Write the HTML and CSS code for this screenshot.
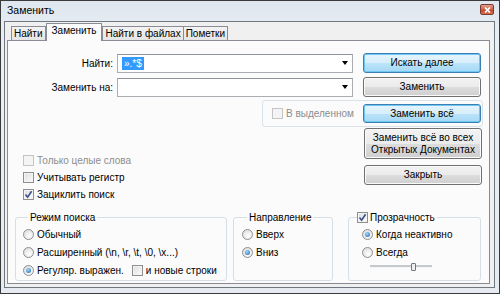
FILE: index.html
```html
<!DOCTYPE html>
<html lang="ru">
<head>
    <meta charset="UTF-8">
    <title>Заменить</title>
    <link rel="stylesheet" href="styles.css">
</head>
<body>
    <div class="window">
        <div class="titlebar">
            <span class="title">Заменить</span>
            <span class="close">
                <svg width="7" height="6" viewBox="0 0 7 6"><path d="M1 0.5L6 5.5M6 0.5L1 5.5" stroke="#fff" stroke-width="1.7"/></svg>
            </span>
        </div>
        <div class="client">
            <div class="tabs">
                <div class="tab">Найти</div>
                <div class="tab active">Заменить</div>
                <div class="tab">Найти в файлах</div>
                <div class="tab">Пометки</div>
            </div>
            <div class="panel">
                <div class="row">
                    <span class="field-label">Найти:</span>
                    <div class="combo"><span class="sel">».*$</span><span class="arrow"></span></div>
                    <div class="btn blue">Искать далее</div>
                </div>
                <div class="row second">
                    <span class="field-label">Заменить на:</span>
                    <div class="combo"><span></span><span class="arrow"></span></div>
                    <div class="btn">Заменить</div>
                </div>
                <div class="sel-box">
                    <span class="opt disabled"><span class="check"></span>В выделенном</span>
                    <div class="btn blue">Заменить всё</div>
                </div>
                <div class="mid">
                    <div class="checks">
                        <span class="opt disabled"><span class="check"></span>Только целые слова</span>
                        <span class="opt"><span class="check"></span>Учитывать регистр</span>
                        <span class="opt"><span class="check on"><svg width="9" height="9" viewBox="0 0 9 9"><path d="M1.5 4.5L3.6 7.2L7.6 1.2" fill="none" stroke="#3b4f8c" stroke-width="1.6"/></svg></span>Зациклить поиск</span>
                    </div>
                    <div class="side-buttons">
                        <div class="btn tall">Заменить всё во всех<br>Открытых Документах</div>
                        <div class="btn">Закрыть</div>
                    </div>
                </div>
                <div class="groups">
                    <fieldset class="group mode">
                        <legend>Режим поиска</legend>
                        <span class="opt"><span class="radio"></span>Обычный</span>
                        <span class="opt"><span class="radio"></span>Расширенный (\n, \r, \t, \0, \x...)</span>
                        <span class="opt"><span class="radio on"></span>Регуляр. выражен.<span class="check newline"></span>и новые строки</span>
                    </fieldset>
                    <fieldset class="group direction">
                        <legend>Направление</legend>
                        <span class="opt"><span class="radio"></span>Вверх</span>
                        <span class="opt"><span class="radio on"></span>Вниз</span>
                    </fieldset>
                    <fieldset class="group transparency">
                        <legend><span class="check on"><svg width="9" height="9" viewBox="0 0 9 9"><path d="M1.5 4.5L3.6 7.2L7.6 1.2" fill="none" stroke="#3b4f8c" stroke-width="1.6"/></svg></span>Прозрачность</legend>
                        <span class="opt"><span class="radio on"></span>Когда неактивно</span>
                        <span class="opt"><span class="radio"></span>Всегда</span>
                        <div class="slider">
                            <span class="track left"></span>
                            <span class="thumb"></span>
                            <span class="track right"></span>
                        </div>
                    </fieldset>
                </div>
            </div>
        </div>
    </div>
</body>
</html>
```

FILE: styles.css
```css
body {
    margin: 0;
    background: #fff;
    font-family: 'Liberation Sans', Arial, sans-serif;
    font-size: 10px;
    color: #000;
}
.window {
    width: 500px;
    height: 294px;
    box-sizing: border-box;
    border: 1px solid #3a3a3a;
    background: linear-gradient(#dfe6ee, #eaeff4 40px, #e6ebf1);
    display: flex;
    flex-direction: column;
}
.titlebar {
    height: 20px;
    display: flex;
    align-items: center;
    justify-content: space-between;
    padding: 0 5px 0 6px;
    flex-shrink: 0;
}
.title {
    font-size: 10.5px;
    margin-top: -2px;
}
.close {
    width: 14px;
    height: 11px;
    box-sizing: border-box;
    border: 1px solid #7a3a2e;
    border-radius: 2px;
    background: linear-gradient(#e3a08f, #cd6048 50%, #c0402a 51%, #d4734f);
    display: flex;
    align-items: center;
    justify-content: center;
    margin-top: -3px;
}
.client {
    flex: 1;
    margin: 0 4px 5px 3px;
    border: 1px solid #6f7780;
    background: #f0f0f0;
    display: flex;
    flex-direction: column;
}

/* tabs */
.tabs {
    display: flex;
    align-items: flex-end;
    height: 18px;
    margin: 1px 0 -1px 2px;
    padding-left: 4px;
    position: relative;
    z-index: 1;
}
.tab {
    height: 14px;
    line-height: 13px;
    padding: 0 2px;
    margin-bottom: 1px;
    box-sizing: border-box;
    border: 1px solid #898c95;
    border-bottom: none;
    background: linear-gradient(#f3f3f3, #e5e5e5);
}
.tab + .tab {
    margin-left: -1px;
}
.tab.active {
    height: 18px;
    margin-bottom: 0;
    padding: 1px 5px 0;
    background: #fbfbfb;
    line-height: 11px;
    margin-left: 0;
}
.tab.active + .tab {
    margin-left: 0;
}
.panel {
    flex: 1;
    margin: 0 4px 3px 2px;
    border: 1px solid #898c95;
    background: #fbfbfb;
    padding-top: 12px;
}

/* top rows */
.row {
    display: flex;
    align-items: center;
    height: 20px;
}
.row.second {
    margin-top: 4px;
}
.field-label {
    width: 105px;
    margin-right: 4px;
    text-align: right;
}
.combo {
    width: 236px;
    height: 19px;
    box-sizing: border-box;
    border: 1px solid #abadb3;
    border-top-color: #8f939c;
    background: #fff;
    display: flex;
    align-items: center;
    justify-content: space-between;
    padding: 0 4px 0 4px;
    margin-right: 10px;
}
.sel {
    background: #3399ff;
    color: #fff;
    padding: 0 2px;
    line-height: 13px;
}
.arrow {
    width: 0;
    height: 0;
    border-left: 3.5px solid transparent;
    border-right: 3.5px solid transparent;
    border-top: 4px solid #000;
}

/* buttons */
.btn {
    width: 118px;
    height: 20px;
    box-sizing: border-box;
    border: 1px solid #707070;
    border-radius: 3px;
    background: linear-gradient(#f2f2f2, #ebebeb 50%, #dddddd 51%, #cfcfcf);
    box-shadow: inset 0 0 0 1px #fbfbfb;
    display: flex;
    align-items: center;
    justify-content: center;
    text-align: center;
    line-height: 12px;
    flex-shrink: 0;
}
.btn.blue {
    border-color: #3c7fb1;
    background: linear-gradient(#e6f4fc, #d6eefb 50%, #bce4fa 51%, #a6d8f4);
    box-shadow: inset 0 0 0 1px #6fc7f5;
}
.btn.tall {
    height: 31px;
}
.sel-box {
    margin: 3px 0 0 254px;
    width: 221px;
    height: 27px;
    box-sizing: border-box;
    border: 1px solid #dce3e8;
    border-radius: 3px;
    display: flex;
    align-items: center;
    justify-content: space-between;
    padding: 0 1px 0 9px;
}
.sel-box .btn {
    height: 19px;
}

/* checks and radios */
.opt {
    display: flex;
    align-items: center;
    height: 17px;
    white-space: nowrap;
}
.opt.disabled {
    color: #8d8d8d;
}
.check {
    width: 11px;
    height: 11px;
    box-sizing: border-box;
    border: 1px solid #8e8f8f;
    background: linear-gradient(135deg, #dcdcdc, #fdfdfd);
    box-shadow: inset 0 0 0 1px #f4f4f4;
    margin-right: 3px;
    display: flex;
    align-items: center;
    justify-content: center;
    flex-shrink: 0;
}
.disabled .check {
    border-color: #c4c4c4;
    background: #f4f4f4;
}
.check.newline {
    margin-left: 8px;
}
.radio {
    width: 11px;
    height: 11px;
    box-sizing: border-box;
    border: 1px solid #8e8f8f;
    border-radius: 50%;
    background: radial-gradient(circle at 60% 65%, #fff, #d6d6d6);
    margin-right: 3px;
    display: flex;
    align-items: center;
    justify-content: center;
    flex-shrink: 0;
}
.radio.on::after {
    content: '';
    width: 5px;
    height: 5px;
    border-radius: 50%;
    background: radial-gradient(circle at 40% 35%, #9fdcff, #1b5fae);
}
.mid {
    display: flex;
    margin-top: 1px;
}
.checks {
    flex: 1;
    padding: 24px 0 0 15px;
}
.side-buttons {
    display: flex;
    flex-direction: column;
    gap: 6px;
    margin-right: 7px;
}

/* group boxes */
.groups {
    display: flex;
    margin-top: 8px;
    padding-left: 7px;
}
.group {
    margin: 0;
    padding: 1px 0 1px 7px;
    border: 1px solid #d5dfe5;
    border-radius: 3px;
    box-sizing: border-box;
}
.group legend {
    margin-left: 5px;
    padding: 0 2px;
    line-height: 13px;
}
.group .opt {
    height: 18px;
}
.mode {
    width: 212px;
    margin-right: 6px;
}
.direction {
    width: 100px;
    margin-right: 15px;
    padding-left: 8px;
}
.transparency {
    width: 133px;
    padding-left: 13px;
}
.transparency legend {
    display: flex;
    align-items: center;
    margin-left: -5px;
    padding: 0 2px 0 0;
}
.transparency legend .check {
    margin-right: 2px;
}
.slider {
    display: flex;
    align-items: center;
    height: 11px;
    padding-left: 8px;
}
.track {
    height: 2px;
    background: #c6c9cc;
    border-bottom: 1px solid #f4f4f4;
}
.track.left {
    width: 41px;
}
.track.right {
    width: 16px;
}
.thumb {
    width: 5px;
    height: 8px;
    box-sizing: border-box;
    border: 1px solid #6f7780;
    border-radius: 1px;
    background: #eceef0;
}
```
